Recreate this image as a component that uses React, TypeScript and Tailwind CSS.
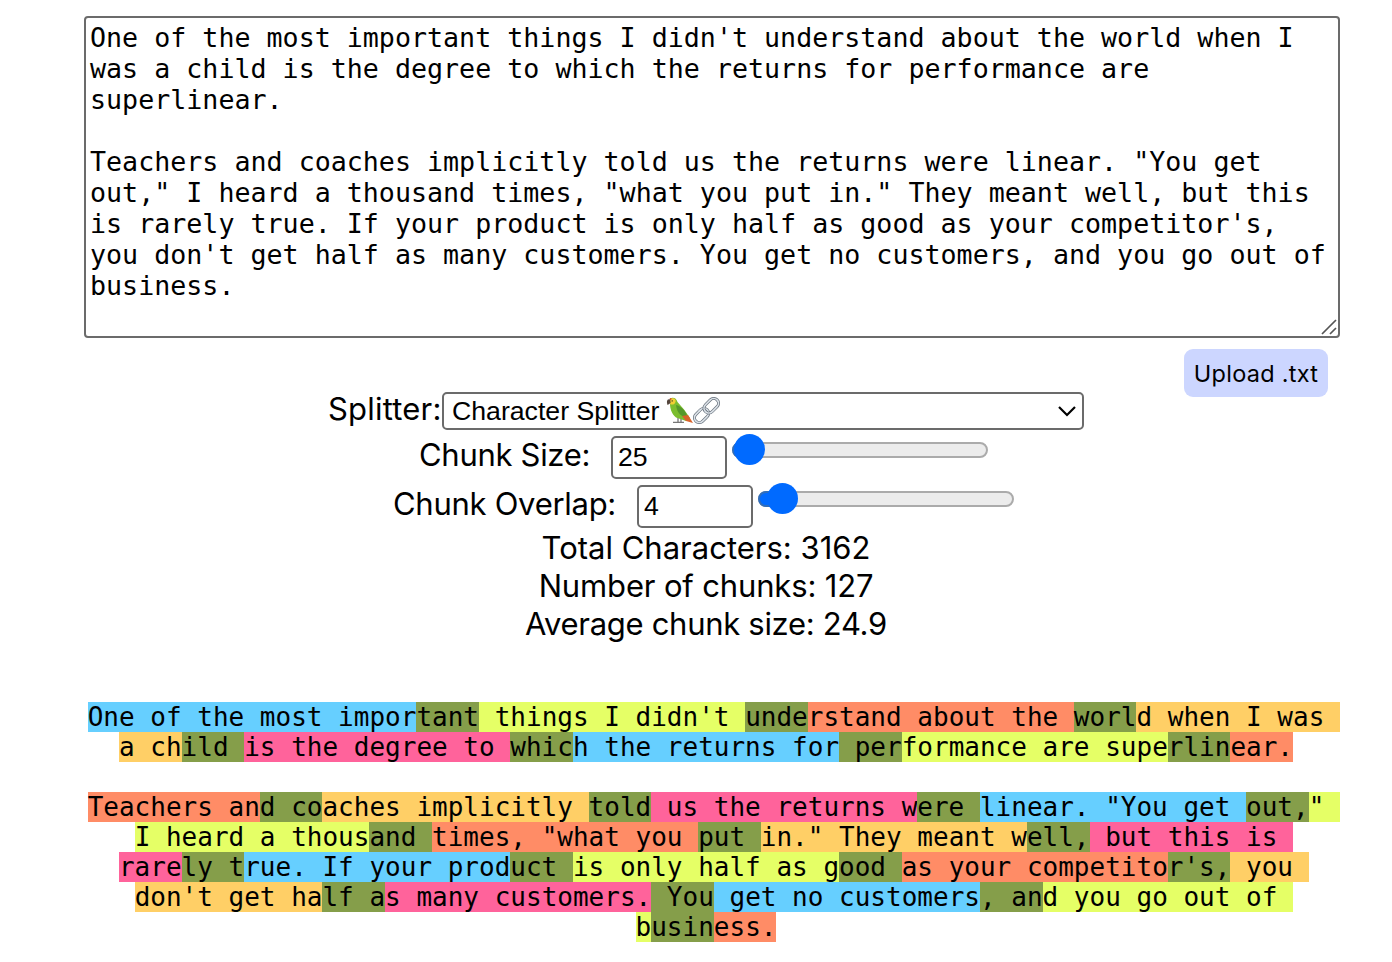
import React from "react";

const SOURCE = `One of the most important things I didn't understand about the world when I was a child is the degree to which the returns for performance are superlinear.

Teachers and coaches implicitly told us the returns were linear. "You get out," I heard a thousand times, "what you put in." They meant well, but this is rarely true. If your product is only half as good as your competitor's, you don't get half as many customers. You get no customers, and you go out of business.
`;

const BLUE = "bg-[#66cfff]";
const OVERLAP = "bg-[#859e4a]";
const LIME = "bg-[#e5ff66]";
const CORAL = "bg-[#ff8c66]";
const AMBER = "bg-[#ffcf66]";
const PINK = "bg-[#ff639b]";

const CHUNKS: [string, string][] = [
  ["One of the most impor", BLUE],
  ["tant", OVERLAP],
  [" things I didn't ", LIME],
  ["unde", OVERLAP],
  ["rstand about the ", CORAL],
  ["worl", OVERLAP],
  ["d when I was a ch", AMBER],
  ["ild ", OVERLAP],
  ["is the degree to ", PINK],
  ["whic", OVERLAP],
  ["h the returns for", BLUE],
  [" per", OVERLAP],
  ["formance are supe", LIME],
  ["rlin", OVERLAP],
  ["ear.\n\nTeachers an", CORAL],
  ["d co", OVERLAP],
  ["aches implicitly ", AMBER],
  ["told", OVERLAP],
  [" us the returns w", PINK],
  ["ere ", OVERLAP],
  ["linear. \"You get ", BLUE],
  ["out,", OVERLAP],
  ["\" I heard a thous", LIME],
  ["and ", OVERLAP],
  ["times, \"what you ", CORAL],
  ["put ", OVERLAP],
  ["in.\" They meant w", AMBER],
  ["ell,", OVERLAP],
  [" but this is rare", PINK],
  ["ly t", OVERLAP],
  ["rue. If your prod", BLUE],
  ["uct ", OVERLAP],
  ["is only half as g", LIME],
  ["ood ", OVERLAP],
  ["as your competito", CORAL],
  ["r's,", OVERLAP],
  [" you don't get ha", AMBER],
  ["lf a", OVERLAP],
  ["s many customers.", PINK],
  [" You", OVERLAP],
  [" get no customers", BLUE],
  [", an", OVERLAP],
  ["d you go out of b", LIME],
  ["usin", OVERLAP],
  ["ess.", CORAL],
];

function Parrot() {
  return (
    <svg className="h-[27px] w-[27px] shrink-0" viewBox="0 0 27 27">
      <path d="M4 1.500C7-.2 10.500 1 11.500 5L18 12.500L24 21L20 24L10 20.500C5.500 17 4 11 4 7Z" fill="#7bbd2e" />
      <path d="M10 8C15 9 20 14 22 21C16 20 11 17 10 8Z" fill="#55982a" />
      <path d="M16 19L22 18L27 26L20 24Z" fill="#d9622a" />
      <path d="M4 2C7 0 10.500 2 9.500 5C8.500 8 6 8 4 7Z" fill="#f0cf35" />
      <path d="M3.500 1.500L5.500 1L5 3.500Z" fill="#dd3d28" />
      <path d="M4.200 2.500C.8 1.300 .3 5 1.600 8L4.600 6Z" fill="#54453c" />
      <circle cx="6.200" cy="3.900" r=".7" fill="#322f21" />
      <path d="M12 21v4M15 22v3M7 25.300h11" stroke="#777" strokeWidth="1.300" fill="none" />
    </svg>
  );
}

function Link() {
  return (
    <svg className="h-[27px] w-[27px] shrink-0" viewBox="0 0 27 27" fill="none">
      <g transform="rotate(-45 13.500 13.500)">
        <rect x="-1.500" y="8.700" width="16" height="9.600" rx="4.800" stroke="#68727d" strokeWidth="3" />
        <rect x="-1.500" y="8.700" width="16" height="9.600" rx="4.800" stroke="#dce2e8" strokeWidth="1.600" />
        <rect x="12" y="8.700" width="16.500" height="9.600" rx="4.800" stroke="#68727d" strokeWidth="3" />
        <rect x="12" y="8.700" width="16.500" height="9.600" rx="4.800" stroke="#dce2e8" strokeWidth="1.600" />
        <path d="M7 8.700h3.500" stroke="#dce2e8" strokeWidth="1.600" />
      </g>
    </svg>
  );
}

function Slider({ value }: { value: number }) {
  return (
    <div className="relative h-4 w-64 rounded-full border-2 border-[#ababab] bg-[#ececec]">
      <div
        className="absolute -top-0.5 -left-0.5 h-4 rounded-full border-2 border-[#2f6dbb] bg-[#006aff]"
        style={{ width: value }}
      />
      <div
        className="absolute -top-[10px] h-[31px] w-[31px] rounded-full bg-[#006aff]"
        style={{ left: value - 17 }}
      />
    </div>
  );
}

function NumberField({ label, value, slider, labelClass }: { label: string; value: string; slider: number; labelClass: string }) {
  return (
    <div className="flex h-[49px] items-start">
      <span className={`${labelClass} shrink-0 leading-[37px] whitespace-nowrap`}>{label}</span>
      <input
        className="h-[43px] w-[116px] rounded-[5px] border-2 border-[#6b6b6b] px-[5px] font-['Liberation_Sans',sans-serif] text-[26.667px] outline-none"
        defaultValue={value}
      />
      <div className="mt-1.5 ml-[5px]">
        <Slider value={slider} />
      </div>
    </div>
  );
}

export default function App() {
  return (
    <main className="h-[962px] w-[1392px] overflow-hidden bg-white pt-4 pl-[84px] font-['Inter',sans-serif] text-[31px] text-black">
      <div className="relative h-[322px] w-[1256px]">
        <textarea
          className="block h-full w-full resize-none overflow-hidden rounded-[4px] border-2 border-[#6b6b6b] p-1 font-['DejaVu_Sans_Mono',monospace] text-[26.667px] leading-[31px] outline-none"
          defaultValue={SOURCE}
          spellCheck={false}
        />
        <svg className="absolute right-[3px] bottom-[3px] h-4 w-4" viewBox="0 0 16 16" fill="none" stroke="#555" strokeWidth="1.700">
          <path d="M1 15L15 1M9 15L15 9" />
        </svg>
      </div>
      <div className="w-[1244px]">
        <div className="flex h-[54px] justify-end pt-[11px]">
          <button className="h-12 w-36 shrink-0 rounded-[9px] bg-[#ccd6ff] pt-0.5 text-[23.5px] tracking-[0.25px] whitespace-nowrap">Upload .txt</button>
        </div>
        <div className="ml-[244px] flex h-[44px] items-start">
          <span className="w-[114px] shrink-0 leading-[34px] tracking-[0.2px] whitespace-nowrap">Splitter:</span>
          <div className="flex h-[38px] w-[642px] items-center rounded-[5px] border-2 border-[#6b6b6b] pr-[6px] pl-2 font-['Liberation_Sans',sans-serif] text-[26.667px]">
            <span className="mr-[7px] whitespace-nowrap">Character Splitter</span>
            <div className="-mt-0.5 flex">
              <Parrot />
              <Link />
            </div>
            <svg className="ml-auto h-[11px] w-[18px]" viewBox="0 0 18 11" fill="none" stroke="#000" strokeWidth="2.200">
              <path d="M1 1L9 9L17 1" />
            </svg>
          </div>
        </div>
        <div className="ml-[335px]">
          <NumberField label="Chunk Size:" value="25" slider={17} labelClass="w-[192px] tracking-[-0.3px]" />
        </div>
        <div className="ml-[309px]">
          <NumberField label="Chunk Overlap:" value="4" slider={24} labelClass="w-[244px] tracking-[-0.28px]" />
        </div>
        <div className="-mt-[5px] text-center leading-[38px]">
          <p>Total Characters: 3162</p>
          <p className="tracking-[-0.15px]">Number of chunks: 127</p>
          <p className="tracking-[-0.3px]">Average chunk size: 24.9</p>
        </div>
        <div className="mt-[59px] text-center font-['DejaVu_Sans_Mono',monospace] text-[26px] leading-[30px] whitespace-pre-wrap">
          {CHUNKS.map(([text, color], i) => (
            <span key={i} className={color}>{text}</span>
          ))}
        </div>
      </div>
    </main>
  );
}
